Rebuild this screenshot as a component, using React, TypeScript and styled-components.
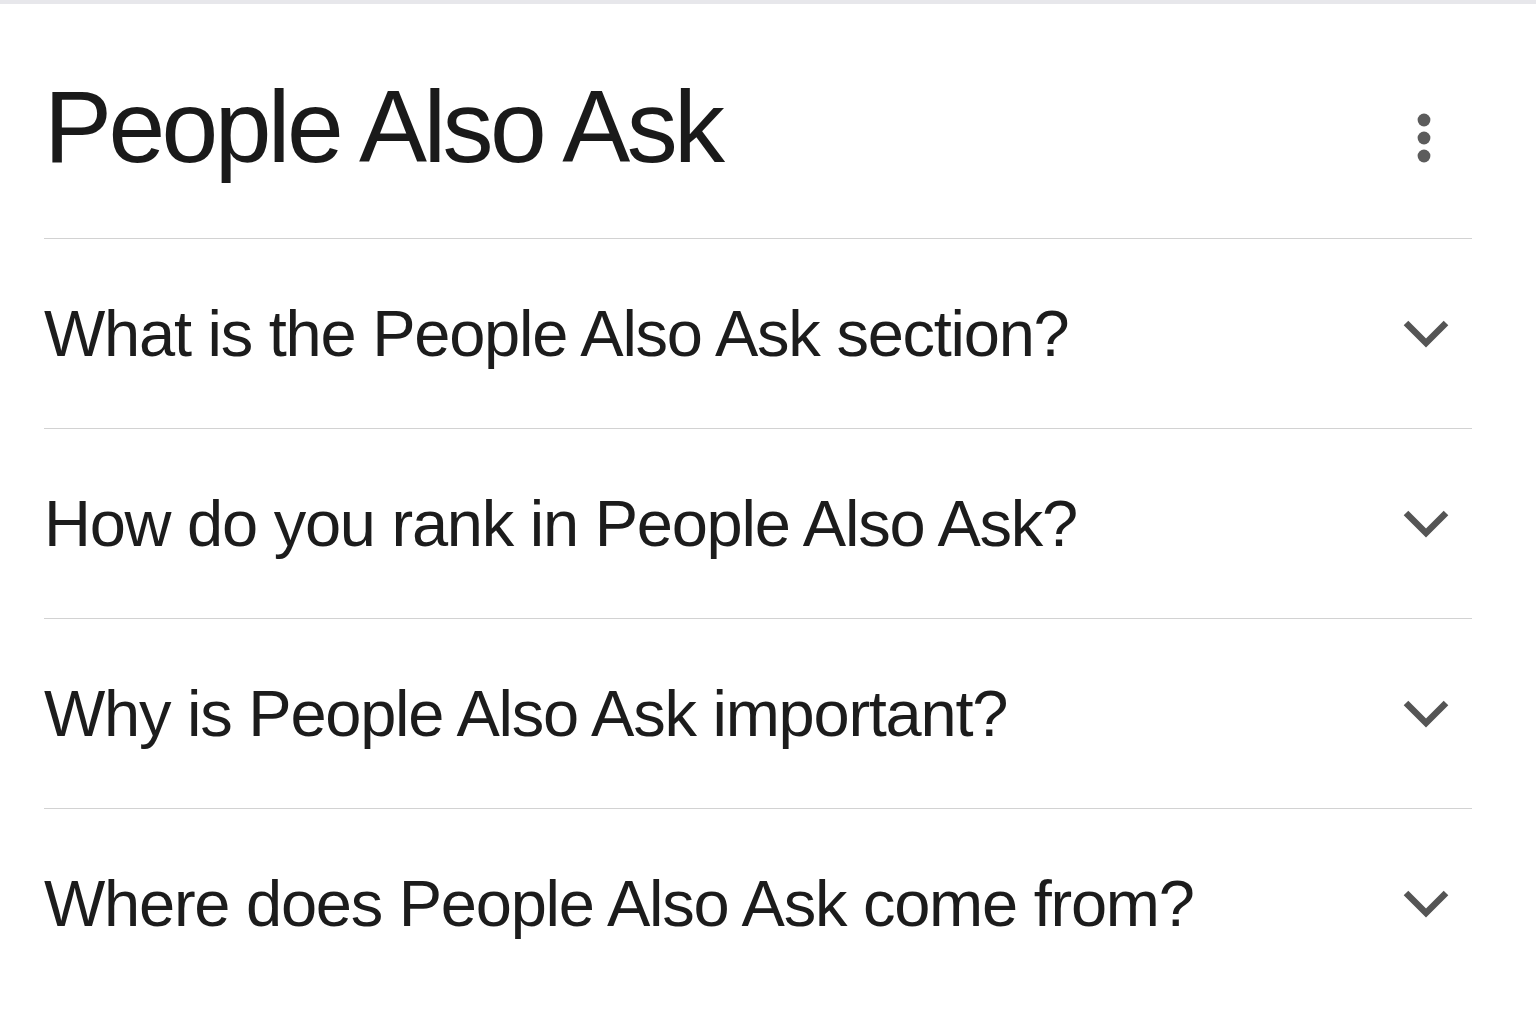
import { memo } from 'react';
import styled, { createGlobalStyle } from 'styled-components';

// -----------------------------------------------------------------------------

const questions = [
	'What is the People Also Ask section?',
	'How do you rank in People Also Ask?',
	'Why is People Also Ask important?',
	'Where does People Also Ask come from?',
];

const App = memo(function App(): JSX.Element {
	return (
		<>
			<GlobalStyle />
			<TopBar />
			<Container>
				<Header>
					<Title>People Also Ask</Title>
					<MenuButton aria-label="More options">
						<svg width="14" height="50" viewBox="0 0 14 50">
							<circle cx="7" cy="7" r="6.4" fill="#5c5c5c" />
							<circle cx="7" cy="25" r="6.4" fill="#5c5c5c" />
							<circle cx="7" cy="43" r="6.4" fill="#5c5c5c" />
						</svg>
					</MenuButton>
				</Header>

				<List>
					{questions.map((question) => (
						<Item key={question}>
							<Question>{question}</Question>
							<Chevron aria-hidden>
								<svg width="46" height="32" viewBox="0 0 46 32">
									<polyline
										points="3,5 23,25 43,5"
										fill="none"
										stroke="#555555"
										strokeWidth="6.5"
										strokeLinejoin="miter"
									/>
								</svg>
							</Chevron>
						</Item>
					))}
				</List>
			</Container>
		</>
	);
});

export default App;

// -----------------------------------------------------------------------------

const GlobalStyle = createGlobalStyle`
	html, body {
		margin: 0;
		background: #ffffff;
		font-family: "Liberation Sans", Arial, sans-serif;
		color: #1c1c1c;
	}
`;

const TopBar = styled.div`
	height: 4px;
	background: #e7e7eb;
`;

const Container = styled.div`
	padding: 0 64px 0 44px;
`;

const Header = styled.div`
	display: flex;
	align-items: center;
	justify-content: space-between;
	padding: 72px 0 60px 0;
`;

const Title = styled.h1`
	margin: 0;
	font-size: 102px;
	font-weight: 400;
	line-height: 1;
	letter-spacing: -3.6px;
	color: #1a1a1a;
`;

const MenuButton = styled.button`
	display: flex;
	padding: 0;
	margin: 21px 41px 0 0;
	border: none;
	background: none;
`;

const List = styled.div`
	display: flex;
	flex-direction: column;
`;

const Item = styled.div`
	display: flex;
	align-items: center;
	justify-content: space-between;
	height: 189px;
	border-top: 1px solid #d2d2d2;
`;

const Question = styled.span`
	font-size: 65px;
	line-height: 1;
	letter-spacing: -1.25px;
	color: #1c1c1c;
`;

const Chevron = styled.span`
	display: flex;
	margin-right: 23px;
`;
